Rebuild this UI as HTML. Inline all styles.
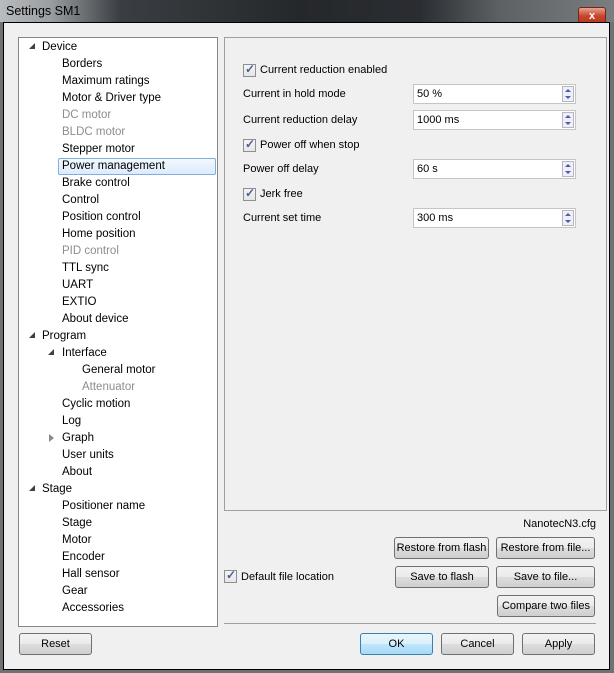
<!DOCTYPE html>
<html><head><style>
*{margin:0;padding:0;box-sizing:border-box}
body{width:614px;height:673px;overflow:hidden;font-family:"Liberation Sans",sans-serif;font-size:11px;color:#000;background:#2a2d30;position:relative}
.tb{position:absolute;left:0;top:0;width:614px;height:24px;background:linear-gradient(90deg,#b8bcbe 0px,#9a9ea1 50px,#3a3e42 120px,#25282b 300px,#2a2d31 420px,#5d6164 500px,#7a7e80 614px)}
.title{position:absolute;left:6px;top:4px;font-size:12.5px;color:#000}
.close{position:absolute;left:578px;top:7px;width:28px;height:18px;border:1px solid #6b2a1c;border-radius:3px;background:linear-gradient(#e8a28f,#c9452a 50%,#b8341c);color:#fff;font-weight:bold;text-align:center;font-size:11px;line-height:16px}
.client{position:absolute;left:3px;top:22px;width:607px;height:648px;background:#f0f0f0;border:1px solid #000}
.frameR{position:absolute;left:610px;top:22px;width:4px;height:651px;background:#6e7275}
.frameL{position:absolute;left:0;top:22px;width:3px;height:651px;background:#6e7275}
.frameB{position:absolute;left:0;top:670px;width:614px;height:3px;background:#6e7275}
.tree{position:absolute;left:18px;top:37px;width:200px;height:590px;background:#fff;border:1px solid #828790}
.in{position:absolute;left:0;top:1px;width:198px}
.it{position:absolute;height:17px;line-height:17px;white-space:nowrap;font-size:11.5px}
.g{color:#8d8d8d}
.sel{background:linear-gradient(#f2f8fe,#dcebfc);border:1px solid #84acdd;border-radius:2px;padding:0 3px;margin-left:-4px;line-height:15px}
.ar{position:absolute;width:0;height:0;border-left:6px solid transparent;border-bottom:6px solid #404040}
.ar2{position:absolute;width:0;height:0;border-top:4px solid transparent;border-bottom:4px solid transparent;border-left:5px solid #8a8a8a}
.grp{position:absolute;left:224px;top:37px;width:383px;height:474px;border:1px solid #a0a0a0}
.lbl{position:absolute;white-space:nowrap}
.cb{position:absolute;width:13px;height:13px;border:1px solid #8f8f8f;background:linear-gradient(#f4f4f4,#e6e6e6)}
.cb:after{content:"✓";position:absolute;left:1px;top:-3px;font-size:12px;font-weight:bold;color:#4a5f9b}
.sp{position:absolute;left:413px;width:163px;height:20px;border:1px solid #c5c5c5;background:#fff;padding-left:3px;line-height:19px}
.sp i{position:absolute;right:1px;top:1px;width:12px;height:16px;border:1px solid #b8b8b8;background:#eef}
.sp i:before{content:"";position:absolute;left:2px;top:2px;border-left:3px solid transparent;border-right:3px solid transparent;border-bottom:3px solid #4a5f9b}
.sp i:after{content:"";position:absolute;left:2px;top:9px;border-left:3px solid transparent;border-right:3px solid transparent;border-top:3px solid #4a5f9b}
.btn{position:absolute;height:22px;border:1px solid #707070;border-radius:3px;background:linear-gradient(#f2f2f2 0%,#ebebeb 50%,#dddddd 51%,#cfcfcf 100%);text-align:center;line-height:20px;white-space:nowrap}
.ok{border-color:#3c7fb1;background:linear-gradient(#eaf6fd 0%,#d9f0fc 50%,#bee6fd 51%,#a7d9f5 100%)}
</style></head><body>
<div class="tb"><div class="title">Settings SM1</div><div class="close">x</div></div>
<div class="frameL"></div><div class="frameR"></div><div class="frameB"></div>
<div class="client"></div>
<div class="tree"><div class="in">
<div class="ar" style="left:10px;top:4px"></div><div class="it" style="left:23px;top:0">Device</div>
<div class="it" style="left:43px;top:17px">Borders</div>
<div class="it" style="left:43px;top:34px">Maximum ratings</div>
<div class="it" style="left:43px;top:51px">Motor &amp; Driver type</div>
<div class="it g" style="left:43px;top:68px">DC motor</div>
<div class="it g" style="left:43px;top:85px">BLDC motor</div>
<div class="it" style="left:43px;top:102px">Stepper motor</div>
<div class="it sel" style="left:43px;top:119px;width:158px">Power management</div>
<div class="it" style="left:43px;top:136px">Brake control</div>
<div class="it" style="left:43px;top:153px">Control</div>
<div class="it" style="left:43px;top:170px">Position control</div>
<div class="it" style="left:43px;top:187px">Home position</div>
<div class="it g" style="left:43px;top:204px">PID control</div>
<div class="it" style="left:43px;top:221px">TTL sync</div>
<div class="it" style="left:43px;top:238px">UART</div>
<div class="it" style="left:43px;top:255px">EXTIO</div>
<div class="it" style="left:43px;top:272px">About device</div>
<div class="ar" style="left:10px;top:293px"></div><div class="it" style="left:23px;top:289px">Program</div>
<div class="ar" style="left:29px;top:310px"></div><div class="it" style="left:43px;top:306px">Interface</div>
<div class="it" style="left:63px;top:323px">General motor</div>
<div class="it g" style="left:63px;top:340px">Attenuator</div>
<div class="it" style="left:43px;top:357px">Cyclic motion</div>
<div class="it" style="left:43px;top:374px">Log</div>
<div class="ar2" style="left:30px;top:395px"></div><div class="it" style="left:43px;top:391px">Graph</div>
<div class="it" style="left:43px;top:408px">User units</div>
<div class="it" style="left:43px;top:425px">About</div>
<div class="ar" style="left:10px;top:446px"></div><div class="it" style="left:23px;top:442px">Stage</div>
<div class="it" style="left:43px;top:459px">Positioner name</div>
<div class="it" style="left:43px;top:476px">Stage</div>
<div class="it" style="left:43px;top:493px">Motor</div>
<div class="it" style="left:43px;top:510px">Encoder</div>
<div class="it" style="left:43px;top:527px">Hall sensor</div>
<div class="it" style="left:43px;top:544px">Gear</div>
<div class="it" style="left:43px;top:561px">Accessories</div>
</div></div>
<div class="grp"></div>
<div class="cb" style="left:243px;top:64px"></div><div class="lbl" style="left:260px;top:64px">Current reduction enabled</div>
<div class="lbl" style="left:243px;top:88px">Current in hold mode</div><div class="sp" style="top:84px">50 %<i></i></div>
<div class="lbl" style="left:243px;top:114px">Current reduction delay</div><div class="sp" style="top:110px">1000 ms<i></i></div>
<div class="cb" style="left:243px;top:139px"></div><div class="lbl" style="left:260px;top:139px">Power off when stop</div>
<div class="lbl" style="left:243px;top:163px">Power off delay</div><div class="sp" style="top:159px">60 s<i></i></div>
<div class="cb" style="left:243px;top:188px"></div><div class="lbl" style="left:260px;top:188px">Jerk free</div>
<div class="lbl" style="left:243px;top:212px">Current set time</div><div class="sp" style="top:208px">300 ms<i></i></div>
<div class="lbl" style="left:500px;top:518px;width:96px;text-align:right">NanotecN3.cfg</div>
<div class="btn" style="left:394px;top:537px;width:95px">Restore from flash</div>
<div class="btn" style="left:496px;top:537px;width:99px">Restore from file...</div>
<div class="cb" style="left:224px;top:570px"></div><div class="lbl" style="left:241px;top:571px">Default file location</div>
<div class="btn" style="left:395px;top:566px;width:94px">Save to flash</div>
<div class="btn" style="left:496px;top:566px;width:99px">Save to file...</div>
<div class="btn" style="left:497px;top:595px;width:98px">Compare two files</div>
<div style="position:absolute;left:224px;top:623px;width:372px;height:1px;background:#a0a0a0"></div>
<div class="btn" style="left:19px;top:633px;width:73px">Reset</div>
<div class="btn ok" style="left:360px;top:633px;width:73px">OK</div>
<div class="btn" style="left:441px;top:633px;width:73px">Cancel</div>
<div class="btn" style="left:522px;top:633px;width:73px">Apply</div>
</body></html>
